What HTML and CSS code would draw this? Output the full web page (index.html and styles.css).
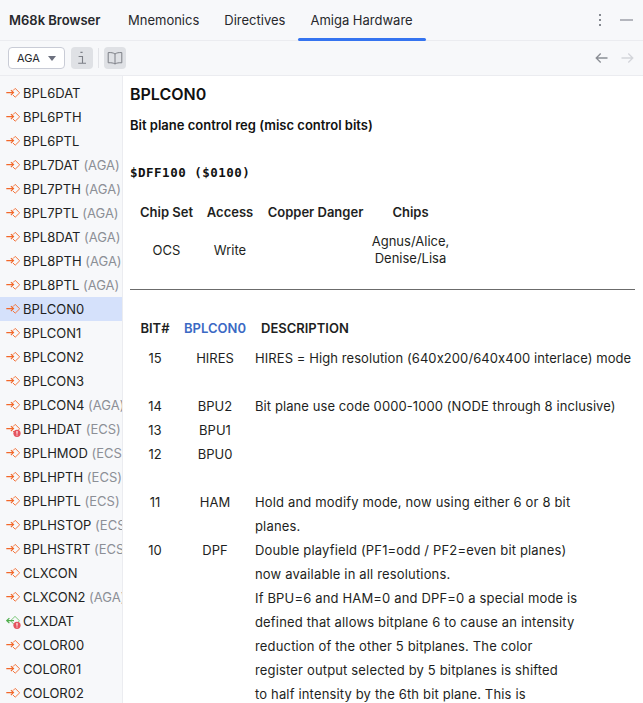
FILE: index.html
```html
<!DOCTYPE html>
<html lang="en">
<head>
<meta charset="utf-8">
<title>M68k Browser</title>
<link rel="stylesheet" href="styles.css">
</head>
<body>
<svg class="defs" width="0" height="0" aria-hidden="true">
  <defs>
    <g id="reg-w">
      <path d="M7 5.6 9.2 3.4 13.7 7.8 9.2 12.2 7 10" fill="none" stroke="#f4773f" stroke-width="1"/>
      <path d="M0.3 7.6H7.3M4.9 5.1 7.5 7.6 4.9 10.1" fill="none" stroke="#f2682a" stroke-width="1.2"/>
    </g>
    <g id="reg-r">
      <path d="M9 3.4 13.5 7.8 9 12.2 4.5 7.8Z" fill="none" stroke="#7cc879" stroke-width="1"/>
      <path d="M8 7.6H0.8M3.4 5.1 0.8 7.6 3.4 10.1" fill="none" stroke="#4fae4b" stroke-width="1.2"/>
    </g>
    <g id="warn">
      <circle cx="11" cy="12.3" r="3.6" fill="#e5545f"/>
      <path d="M11 10.1V12.7M11 13.6V14.6" stroke="#fff" stroke-width="1.1"/>
    </g>
  </defs>
</svg>
<div class="app">
  <header class="tabs">
    <span class="title">M68k Browser</span>
    <nav class="tablist">
      <span class="tab">Mnemonics</span>
      <span class="tab">Directives</span>
      <span class="tab tab-active">Amiga Hardware</span>
    </nav>
    <span class="kebab">
      <svg width="4" height="14" viewBox="0 0 4 14"><g fill="#868a91"><rect x="1" y="1" width="2" height="2"/><rect x="1" y="6" width="2" height="2"/><rect x="1" y="11" width="2" height="2"/></g></svg>
    </span>
    <span class="minimize"></span>
  </header>
  <div class="toolbar">
    <button class="combo" type="button">AGA<span class="caret"></span></button>
    <span class="tool tool-on info-tool">
      <svg width="14" height="16" viewBox="0 0 14 16"><path d="M5.4 2.4H7.6M7 2V2.9M3.6 6.5H7.5V13.2M3.2 13.2H11" fill="none" stroke="#7c7f86" stroke-width="1.1"/></svg>
    </span>
    <span class="sep"></span>
    <span class="tool tool-on">
      <svg width="16" height="14" viewBox="0 0 16 14"><path d="M8 3C6.5 1.8 4 1.4 1.2 1.6V11.8C4 11.6 6.5 11.9 8 13 9.5 11.9 12 11.6 14.8 11.8V1.6C12 1.4 9.5 1.8 8 3ZM8 3V13" fill="none" stroke="#7c7f86" stroke-width="1"/></svg>
    </span>
    <span class="toolbar-fill"></span>
    <svg class="nav" width="13" height="12" viewBox="0 0 13 12"><path d="M12.5 6H1.2M5.7 1.5 1.2 6 5.7 10.5" fill="none" stroke="#8b8e95" stroke-width="1.3"/></svg>
    <svg class="nav" width="13" height="12" viewBox="0 0 13 12"><path d="M0.5 6H11.8M7.3 1.5 11.8 6 7.3 10.5" fill="none" stroke="#d3d5da" stroke-width="1.3"/></svg>
  </div>
  <div class="main">
    <aside class="list">
      <div class="row"><svg class="ico" viewBox="0 0 16 16"><use href="#reg-w"/></svg><span>BPL6DAT</span></div>
      <div class="row"><svg class="ico" viewBox="0 0 16 16"><use href="#reg-w"/></svg><span>BPL6PTH</span></div>
      <div class="row"><svg class="ico" viewBox="0 0 16 16"><use href="#reg-w"/></svg><span>BPL6PTL</span></div>
      <div class="row"><svg class="ico" viewBox="0 0 16 16"><use href="#reg-w"/></svg><span>BPL7DAT <em>(AGA)</em></span></div>
      <div class="row"><svg class="ico" viewBox="0 0 16 16"><use href="#reg-w"/></svg><span>BPL7PTH <em>(AGA)</em></span></div>
      <div class="row"><svg class="ico" viewBox="0 0 16 16"><use href="#reg-w"/></svg><span>BPL7PTL <em>(AGA)</em></span></div>
      <div class="row"><svg class="ico" viewBox="0 0 16 16"><use href="#reg-w"/></svg><span>BPL8DAT <em>(AGA)</em></span></div>
      <div class="row"><svg class="ico" viewBox="0 0 16 16"><use href="#reg-w"/></svg><span>BPL8PTH <em>(AGA)</em></span></div>
      <div class="row"><svg class="ico" viewBox="0 0 16 16"><use href="#reg-w"/></svg><span>BPL8PTL <em>(AGA)</em></span></div>
      <div class="row row-sel"><svg class="ico" viewBox="0 0 16 16"><use href="#reg-w"/></svg><span>BPLCON0</span></div>
      <div class="row"><svg class="ico" viewBox="0 0 16 16"><use href="#reg-w"/></svg><span>BPLCON1</span></div>
      <div class="row"><svg class="ico" viewBox="0 0 16 16"><use href="#reg-w"/></svg><span>BPLCON2</span></div>
      <div class="row"><svg class="ico" viewBox="0 0 16 16"><use href="#reg-w"/></svg><span>BPLCON3</span></div>
      <div class="row"><svg class="ico" viewBox="0 0 16 16"><use href="#reg-w"/></svg><span>BPLCON4 <em>(AGA)</em></span></div>
      <div class="row"><svg class="ico" viewBox="0 0 16 16"><use href="#reg-w"/><use href="#warn"/></svg><span>BPLHDAT <em>(ECS)</em></span></div>
      <div class="row"><svg class="ico" viewBox="0 0 16 16"><use href="#reg-w"/></svg><span>BPLHMOD <em>(ECS)</em></span></div>
      <div class="row"><svg class="ico" viewBox="0 0 16 16"><use href="#reg-w"/></svg><span>BPLHPTH <em>(ECS)</em></span></div>
      <div class="row"><svg class="ico" viewBox="0 0 16 16"><use href="#reg-w"/></svg><span>BPLHPTL <em>(ECS)</em></span></div>
      <div class="row"><svg class="ico" viewBox="0 0 16 16"><use href="#reg-w"/></svg><span>BPLHSTOP <em>(ECS)</em></span></div>
      <div class="row"><svg class="ico" viewBox="0 0 16 16"><use href="#reg-w"/></svg><span>BPLHSTRT <em>(ECS)</em></span></div>
      <div class="row"><svg class="ico" viewBox="0 0 16 16"><use href="#reg-w"/></svg><span>CLXCON</span></div>
      <div class="row"><svg class="ico" viewBox="0 0 16 16"><use href="#reg-w"/></svg><span>CLXCON2 <em>(AGA)</em></span></div>
      <div class="row"><svg class="ico" viewBox="0 0 16 16"><use href="#reg-r"/><use href="#warn"/></svg><span>CLXDAT</span></div>
      <div class="row"><svg class="ico" viewBox="0 0 16 16"><use href="#reg-w"/></svg><span>COLOR00</span></div>
      <div class="row"><svg class="ico" viewBox="0 0 16 16"><use href="#reg-w"/></svg><span>COLOR01</span></div>
      <div class="row"><svg class="ico" viewBox="0 0 16 16"><use href="#reg-w"/></svg><span>COLOR02</span></div>
    </aside>
    <article class="doc">
      <h1>BPLCON0</h1>
      <p class="sub">Bit plane control reg (misc control bits)</p>
      <p class="addr">$DFF100 ($0100)</p>
      <table class="meta">
        <tr><th class="m1">Chip Set</th><th class="m2">Access</th><th class="m3">Copper Danger</th><th class="m4">Chips</th></tr>
        <tr><td>OCS</td><td>Write</td><td></td><td>Agnus/Alice,<br>Denise/Lisa</td></tr>
      </table>
      <hr class="rule">
      <table class="bits">
        <tr class="bits-head"><th class="b1">BIT#</th><th class="b2"><span class="link">BPLCON0</span></th><th class="b3">DESCRIPTION</th></tr>
        <tr><td>15</td><td>HIRES</td><td class="desc desc-tight">HIRES = High resolution (640x200/640x400 interlace) mode</td></tr>
        <tr><td></td><td></td><td class="desc">&nbsp;</td></tr>
        <tr><td>14</td><td>BPU2</td><td class="desc desc-tight">Bit plane use code 0000-1000 (NODE through 8 inclusive)</td></tr>
        <tr><td>13</td><td>BPU1</td><td class="desc"></td></tr>
        <tr><td>12</td><td>BPU0</td><td class="desc"></td></tr>
        <tr><td></td><td></td><td class="desc">&nbsp;</td></tr>
        <tr><td>11</td><td>HAM</td><td class="desc">Hold and modify mode, now using either 6 or 8 bit<br>planes.</td></tr>
        <tr><td>10</td><td>DPF</td><td class="desc">Double playfield (PF1=odd / PF2=even bit planes)<br>now available in all resolutions.<br>If BPU=6 and HAM=0 and DPF=0 a special mode is<br>defined that allows bitplane 6 to cause an intensity<br>reduction of the other 5 bitplanes. The color<br>register output selected by 5 bitplanes is shifted<br>to half intensity by the 6th bit plane. This is</td></tr>
      </table>
    </article>
  </div>
</div>
</body>
</html>
```
FILE: styles.css
```css
* { box-sizing: border-box; }
html, body { margin: 0; height: 100%; overflow: hidden; }
body { font-family: Inter, "Liberation Sans", sans-serif; font-size: 13px; color: #1e1f22; background: #fff; font-variant-ligatures: no-contextual; }
.defs { position: absolute; }
.app { height: 703px; display: flex; flex-direction: column; overflow: hidden; }

.tabs { flex: 0 0 41px; display: flex; align-items: center; background: #f7f8fa; border-bottom: 1px solid #ebecf0; padding-left: 9px; }
.title { font-weight: 600; color: #27282c; width: 107px; }
.tablist { display: flex; align-self: stretch; }
.tab { display: flex; align-items: center; padding: 0 13px 0 12px; color: #27282c; position: relative; }
.tab-active::after { content: ""; position: absolute; left: 0; right: 0; bottom: -1px; height: 3px; border-radius: 2px; background: #3574f0; }
.kebab { margin-left: auto; display: flex; }
.minimize { width: 13px; height: 2px; background: #b4b6bd; margin: 0 10px 0 18px; }

.toolbar { flex: 0 0 35px; display: flex; align-items: center; background: #f7f8fa; border-bottom: 1px solid #ebecf0; padding: 0 9px 0 8px; }
.combo { width: 57px; height: 22px; border: 1px solid #c9ccd6; border-radius: 4px; background: #fff; font: 11px Inter, "Liberation Sans", sans-serif; color: #27282c; display: flex; align-items: center; padding: 0 0 0 8px; gap: 8px; }
.caret { width: 0; height: 0; border-left: 4.5px solid transparent; border-right: 4.5px solid transparent; border-top: 5px solid #6c707e; }
.tool { width: 22px; height: 22px; border-radius: 4px; display: flex; align-items: center; justify-content: center; }
.tool-on { background: #dfe1e5; }
.info-tool { margin-left: 6px; }
.sep { width: 1px; height: 20px; background: #e3e4e8; margin: 0 5px; }
.toolbar-fill { flex: 1; }
.nav { margin-left: 13px; }

.main { flex: 1; display: flex; min-height: 0; }
.list { flex: 0 0 123px; background: #f7f8fa; border-right: 1px solid #ebecf0; padding-top: 5px; overflow: hidden; }
.row { height: 24px; display: flex; align-items: center; white-space: nowrap; padding-left: 6px; color: #1e1f22; }
.row-sel { background: #d5e1fb; }
.ico { width: 16px; height: 16px; flex: none; margin-right: 1px; }
.row em { font-style: normal; color: #8c8f96; }

.doc { flex: 1; padding: 0 8px 0 7px; min-width: 0; line-height: 24px; overflow: hidden; }
h1 { font-size: 16px; font-weight: 600; margin: 6px 0 0; line-height: 24px; color: #111; }
.sub { font-size: 13px; font-weight: 600; margin: 7px 0 0; color: #111; }
.addr { font: 700 12.5px "DejaVu Sans Mono", monospace; letter-spacing: 0.5px; line-height: 24px; margin: 24px 0 0; color: #111; }
table { border-collapse: collapse; }
.meta { margin: 15px 0 0 3px; table-layout: fixed; }
.meta th { font-weight: 600; padding: 0; height: 24px; text-align: center; }
.meta td { padding: 9px 0 0; line-height: 17px; text-align: center; }
.m1 { width: 67px; } .m2 { width: 60px; } .m3 { width: 111px; } .m4 { width: 79px; }
.rule { border: 0; border-top: 1px solid #6b6b6b; margin: 22px 0 0; }
.bits { margin: 26px 0 0 5px; table-layout: fixed; }
.bits th { font-weight: 600; padding: 0 0 6px; text-align: center; height: 30px; }
.bits td { padding: 0; text-align: center; vertical-align: top; }
.bits td.desc { text-align: left; white-space: nowrap; letter-spacing: 0.16px; }
.bits td.desc-tight { letter-spacing: 0.08px; }
.b1 { width: 40px; } .b2 { width: 80px; } .b3 { width: 375px; }
.bits th.b3 { text-align: left; padding-left: 6px; }
.link { color: #3b69c4; }
```
